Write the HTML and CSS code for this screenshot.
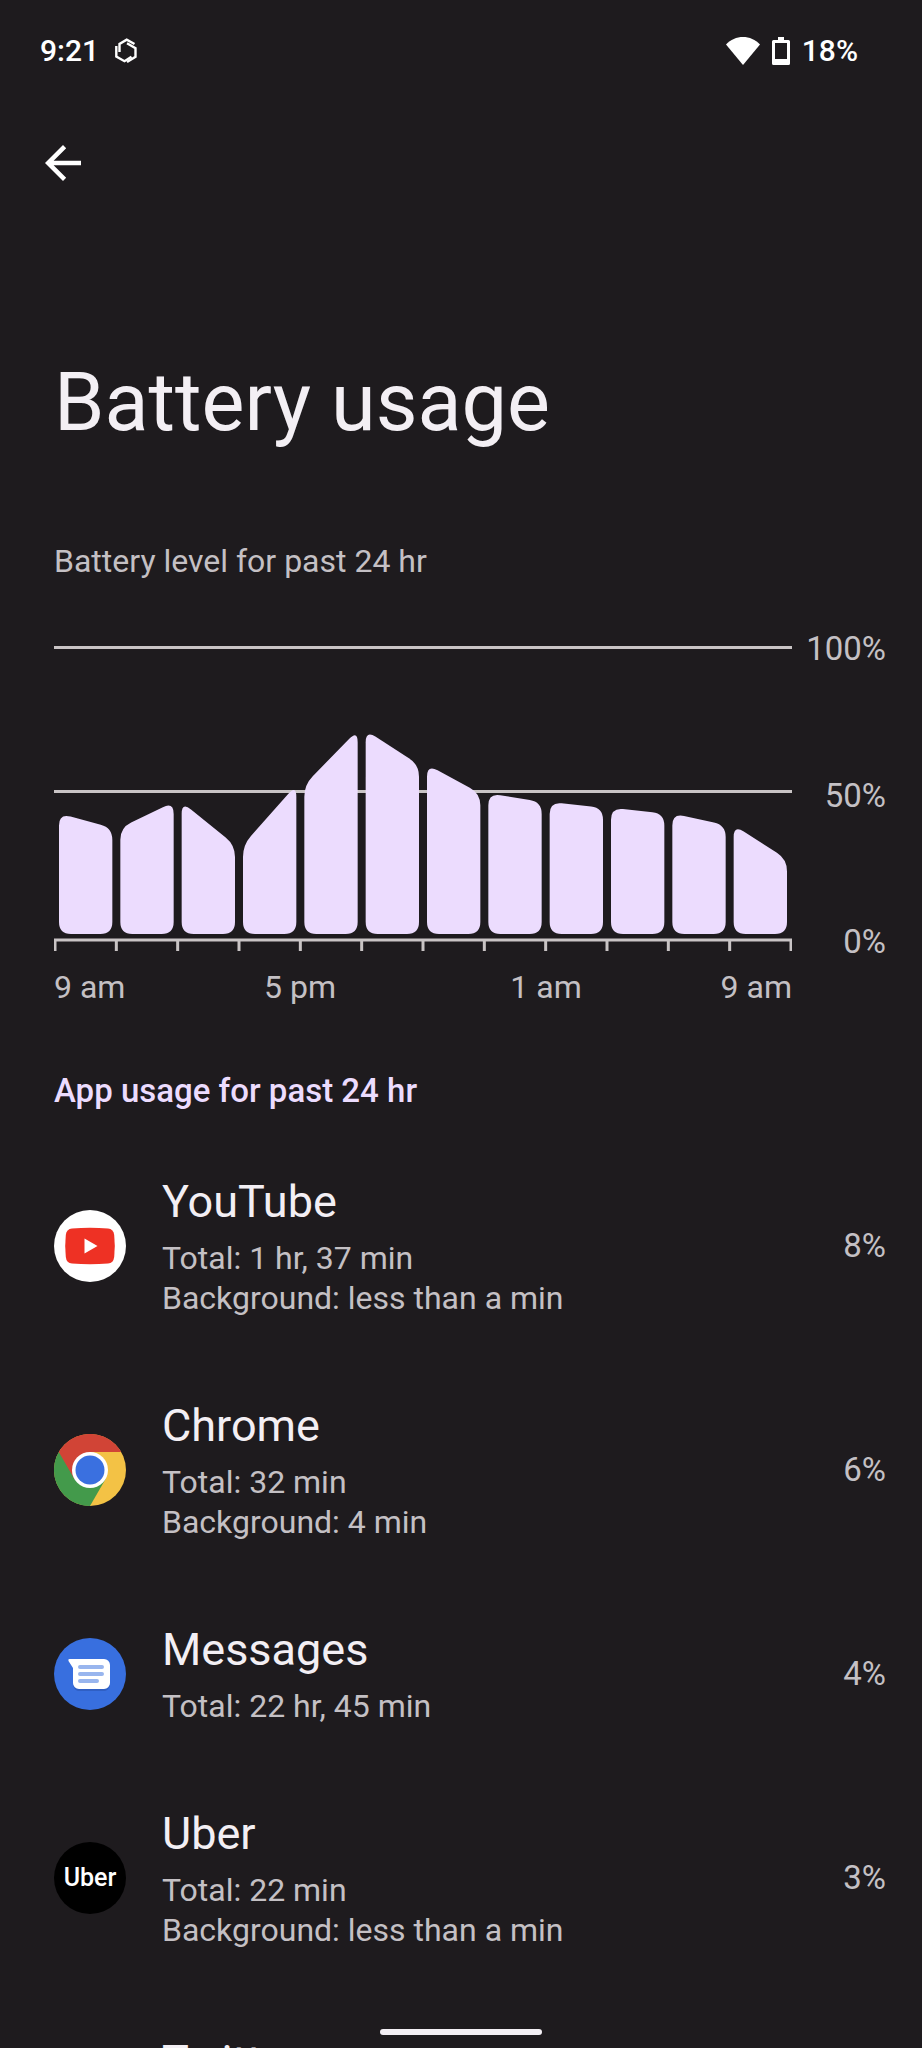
FILE: index.html
```
<!DOCTYPE html>
<html lang="en">
<head>
    <meta charset="UTF-8">
    <meta name="viewport" content="width=device-width, initial-scale=1.0">
    <title>Battery usage</title>
    <link rel="stylesheet" href="styles.css">
</head>
<body>
    <div class="status-bar">
        <span class="time">9:21</span>
        <svg class="hex-icon" viewBox="0 0 22 26" fill="none" stroke="#fff" stroke-width="2.400">
            <path d="M1.300 8v10.500l8.200 4.700 7-4.500"/>
            <path d="M4.500 14V6l7.200-4.300 7.800 4.300"/>
            <path d="M12 5.300l8.500 4.900v8.600L12 24"/>
        </svg>
        <div class="status-right">
            <svg class="wifi-icon" viewBox="0 0 34 28"><path d="M17 28L0 7.600C4.600 2.600 10.600 0 17 0s12.400 2.600 17 7.600z" fill="#fff"/></svg>
            <svg class="cell-icon" viewBox="0 0 18 28"><path fill="#fff" fill-rule="evenodd" d="M6 0h6v3h4.500A1.500 1.500 0 0 1 18 4.500v22a1.500 1.500 0 0 1-1.500 1.500h-15A1.500 1.500 0 0 1 0 26.500v-22A1.500 1.500 0 0 1 1.500 3H6zM3 6v16h12V6z"/></svg>
            <span class="charge">18%</span>
        </div>
    </div>

    <header>
        <button class="back" aria-label="Back">
            <svg viewBox="0 0 24 24"><path d="M20 11H7.830l5.590-5.590L12 4l-8 8 8 8 1.410-1.410L7.830 13H20v-2z" fill="#fff"/></svg>
        </button>
        <h1>Battery usage</h1>
    </header>

    <main>
        <p class="chart-title">Battery level for past 24 hr</p>
        <div class="chart">
            <svg class="plot" id="plot" viewBox="0 0 738 306"></svg>
            <div class="y-labels">
                <span>100%</span>
                <span>50%</span>
                <span>0%</span>
            </div>
            <div class="x-labels">
                <span>9 am</span>
                <span>5 pm</span>
                <span>1 am</span>
                <span>9 am</span>
            </div>
        </div>

        <h2>App usage for past 24 hr</h2>
        <ul class="apps">
            <li>
                <svg class="app-icon" viewBox="0 0 72 72">
                    <circle cx="36" cy="36" r="36" fill="#fff"/>
                    <path d="M18 18.500q18-1.500 36 0 5.500.5 6.200 6.500 1.200 11 0 22-.7 6-6.200 6.500-18 1.500-36 0-5.500-.5-6.200-6.500-1.200-11 0-22 .7-6 6.200-6.500z" fill="#ee3124"/>
                    <path d="M30.500 28.500v15L43.500 36z" fill="#fff"/>
                </svg>
                <div class="app-text">
                    <h3>YouTube</h3>
                    <p>Total: 1 hr, 37 min</p>
                    <p>Background: less than a min</p>
                </div>
                <span class="percent">8%</span>
            </li>
            <li>
                <svg class="app-icon" viewBox="0 0 72 72">
                    <circle cx="36" cy="36" r="36" fill="#f3c245"/>
                    <path d="M36 36L51.600 45 36 72A36 36 0 0 1 4.800 18z" fill="#439a4b"/>
                    <path d="M36 36L20.400 45 4.800 18A36 36 0 0 1 67.200 18H36z" fill="#d14436"/>
                    <circle cx="36" cy="36" r="18" fill="#fff"/>
                    <circle cx="36" cy="36" r="14.500" fill="#3a70e0"/>
                </svg>
                <div class="app-text">
                    <h3>Chrome</h3>
                    <p>Total: 32 min</p>
                    <p>Background: 4 min</p>
                </div>
                <span class="percent">6%</span>
            </li>
            <li>
                <svg class="app-icon" viewBox="0 0 72 72">
                    <circle cx="36" cy="36" r="36" fill="#386fdf"/>
                    <path d="M19 47q1 5 5 6h27q4-1 5-6z" fill="#2f5fc4"/>
                    <path d="M15.500 21H50a6 6 0 0 1 6 6v18a6 6 0 0 1-6 6H25a6 6 0 0 1-6-6V30l-4.500-7q-.8-2 1-2z" fill="#fff"/>
                    <path d="M26 29h22M26 36h22M26 43h17" stroke="#98b5ee" stroke-width="4" stroke-linecap="round"/>
                </svg>
                <div class="app-text">
                    <h3>Messages</h3>
                    <p>Total: 22 hr, 45 min</p>
                </div>
                <span class="percent">4%</span>
            </li>
            <li>
                <span class="app-icon uber">Uber</span>
                <div class="app-text">
                    <h3>Uber</h3>
                    <p>Total: 22 min</p>
                    <p>Background: less than a min</p>
                </div>
                <span class="percent">3%</span>
            </li>
            <li>
                <span class="app-icon"></span>
                <div class="app-text">
                    <h3>Twitter</h3>
                </div>
            </li>
        </ul>
    </main>

    <div class="home-bar"></div>

    <script>
        // battery level at each tick, every two hours
        const levels = [42, 37, 46, 31, 52, 71, 59, 49, 46, 44, 42, 38, 26];
        const step = 736 / 12;
        const bottom = 288;
        const radius = 12;

        // polygon with every corner rounded off
        function roundedPath(points) {
            let d = "";
            points.forEach((p, i) => {
                const prev = points[(i + points.length - 1) % points.length];
                const next = points[(i + 1) % points.length];
                const a = towards(p, prev);
                const b = towards(p, next);
                d += `${i ? "L" : "M"}${a} Q${p} ${b}`;
            });
            return d + "Z";
        }

        function towards(from, to) {
            const dx = to[0] - from[0];
            const dy = to[1] - from[1];
            const k = radius / Math.hypot(dx, dy);
            return [from[0] + dx * k, from[1] + dy * k];
        }

        let svg = '<path class="line" d="M0 1.500H738M0 145.500H738M0 294H738"/>';
        for (let i = 0; i <= 12; i++) {
            const x = 1 + i * step;
            svg += `<path class="tick" d="M${x} 294V305"/>`;
            if (i < 12) {
                const left = x + 4;
                const right = x + step - 4;
                const d = roundedPath([
                    [left, bottom - levels[i] * 2.87],
                    [right, bottom - levels[i + 1] * 2.87],
                    [right, bottom],
                    [left, bottom]
                ]);
                svg += `<path class="bar" d="${d}"/>`;
            }
        }
        document.getElementById("plot").innerHTML = svg;
    </script>
</body>
</html>
```

FILE: styles.css
```
* {
    box-sizing: border-box;
}

body {
    margin: 0;
    height: 100vh;
    overflow: hidden;
    background: #1e1b1e;
    color: #c4c0c4;
    font-family: Roboto, sans-serif;
    font-size: 32px;
    line-height: 40px;
}

h1, h2, h3, p, ul {
    margin: 0;
    padding: 0;
    font-weight: 400;
}

/* Status bar */
.status-bar {
    display: flex;
    align-items: center;
    gap: 16px;
    padding: 31px 64px 0 40px;
    color: #fff;
    font-size: 30px;
    font-weight: 500;
}

.status-right {
    display: flex;
    align-items: center;
    gap: 12px;
    margin-left: auto;
}

.hex-icon {
    width: 22px;
    height: 26px;
}

.wifi-icon {
    width: 34px;
    height: 28px;
}

.cell-icon {
    width: 18px;
    height: 28px;
}

/* Header */
header {
    padding: 65px 36px 0;
}

.back {
    display: block;
    width: 54px;
    height: 54px;
    padding: 0;
    border: none;
    background: none;
    cursor: pointer;
}

.back svg {
    display: block;
}

h1 {
    margin-top: 165px;
    padding-left: 18px;
    color: #f3eff4;
    font-size: 81px;
    line-height: 96px;
}

/* Chart */
main {
    padding: 90px 36px 0 54px;
}

.chart {
    display: grid;
    grid-template-columns: 1fr 94px;
    margin-top: 65px;
}

.plot {
    display: block;
    width: 100%;
}

.line, .tick {
    fill: none;
    stroke: #c9c4c5;
    stroke-width: 3;
}

.bar {
    fill: #ecdcfe;
}

.y-labels {
    display: flex;
    flex-direction: column;
    justify-content: space-between;
    margin: -17px 0 -10px;
    font-size: 33px;
    text-align: right;
}

.x-labels {
    display: grid;
    grid-template-columns: 1fr 2fr 2fr 1fr;
    margin-top: 15px;
    text-align: center;
    white-space: nowrap;
}

.x-labels span:first-child {
    text-align: left;
}

.x-labels span:last-child {
    text-align: right;
}

/* App list */
h2 {
    margin-top: 64px;
    color: #ecdcfe;
    font-size: 33px;
    font-weight: 500;
}

.apps {
    margin-top: 23px;
    list-style: none;
}

.apps li {
    display: flex;
    align-items: center;
    gap: 36px;
    padding: 40px 0;
}

.app-icon {
    flex: none;
    width: 72px;
    height: 72px;
}

.uber {
    border-radius: 50%;
    background: #000;
    color: #fff;
    font-size: 25px;
    font-weight: 500;
    line-height: 72px;
    text-align: center;
}

.app-text {
    flex: 1;
}

.percent {
    font-size: 33px;
}

h3 {
    margin-bottom: 8px;
    color: #f3eff4;
    font-size: 45px;
    line-height: 56px;
}

/* Gesture bar */
.home-bar {
    position: fixed;
    bottom: 13px;
    left: 50%;
    width: 162px;
    height: 6px;
    border-radius: 3px;
    background: #f3eff4;
    transform: translateX(-50%);
}
```
